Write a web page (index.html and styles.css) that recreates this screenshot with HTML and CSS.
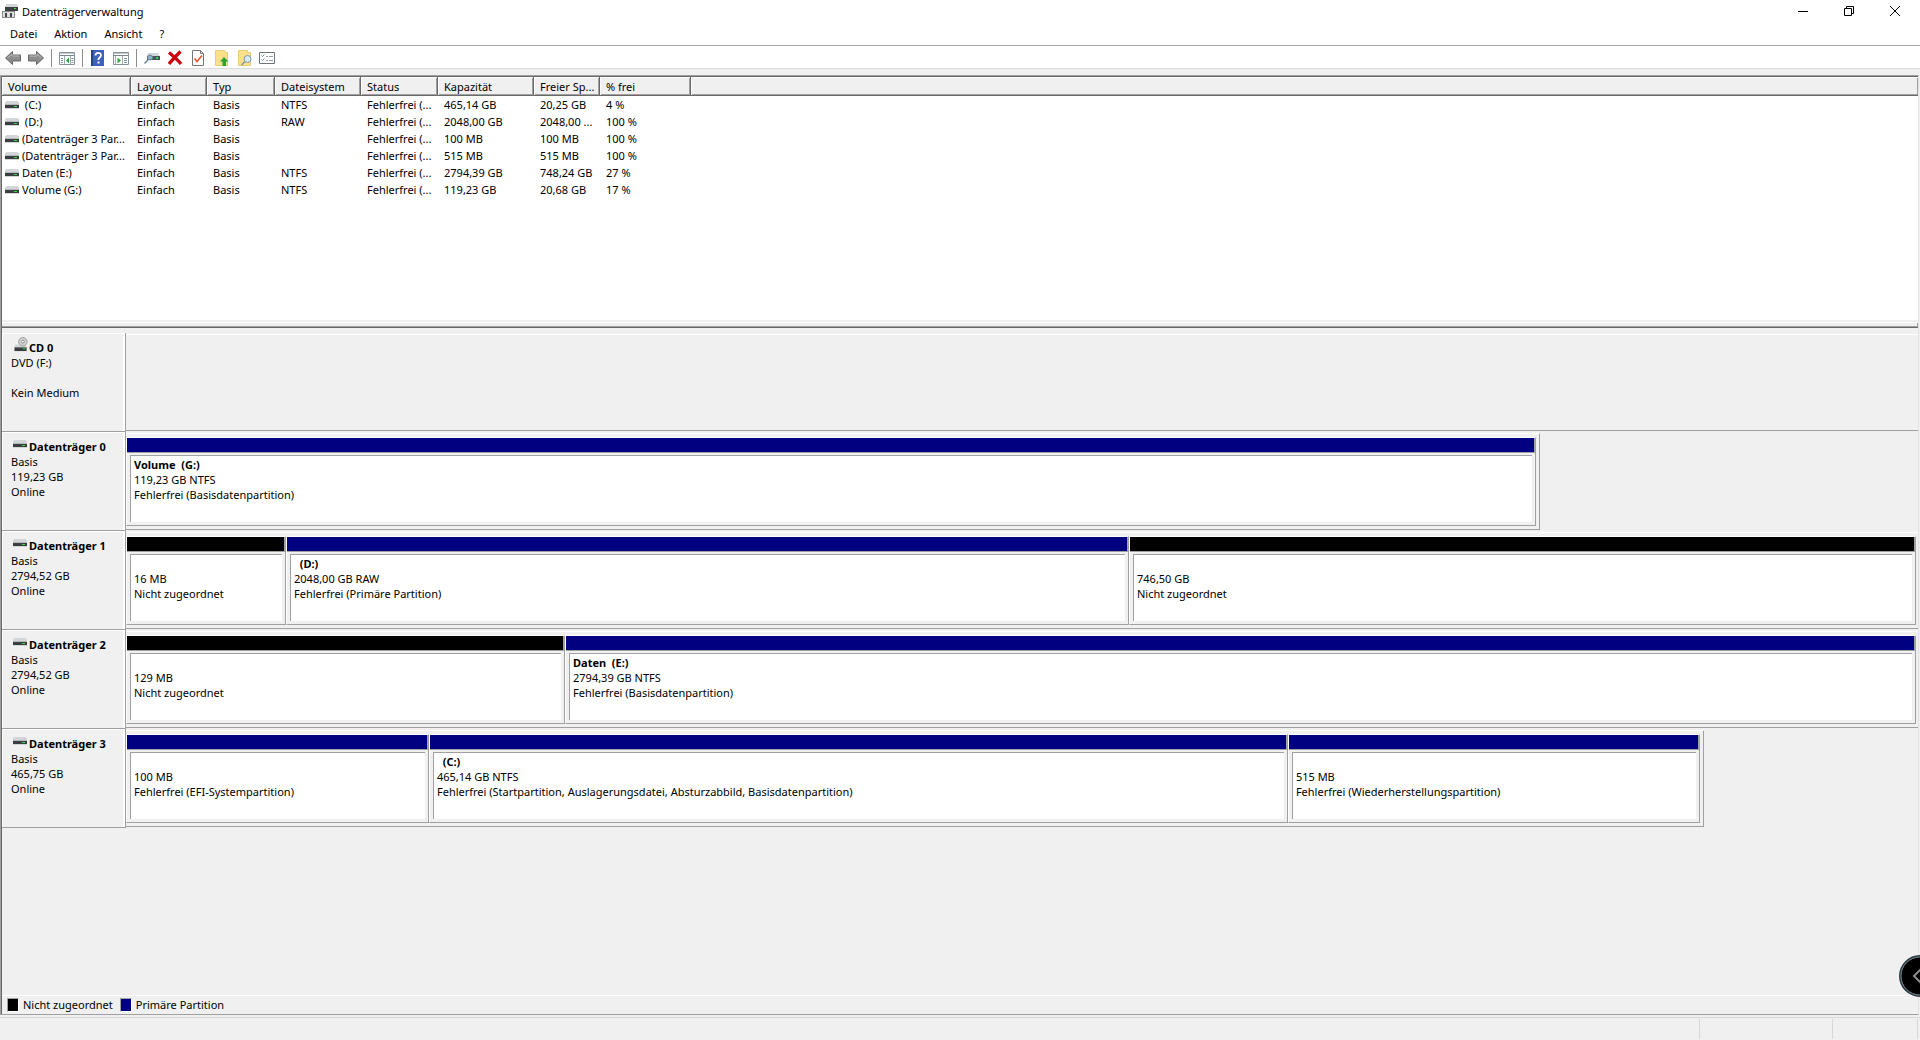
FILE: index.html
```html
<!DOCTYPE html>
<html lang="de">
<head>
    <meta charset="UTF-8">
    <meta name="viewport" content="width=device-width, initial-scale=1.0">
    <title>Datenträgerverwaltung</title>
    <link rel="stylesheet" href="styles.css">
</head>
<body>
    <!-- shared icons -->
    <svg class="sprite" aria-hidden="true">
        <symbol id="drive" viewBox="0 0 14 8">
            <path d="M1 0h12v1h1v3H0V1h1z" fill="#d3d6d9"/>
            <path d="M0 4h14v3H0z" fill="#3c3f42"/>
            <path d="M0 3h14v1H0z" fill="#b4b8bb"/>
            <path d="M9 5h3v1H9z" fill="#35d94a"/>
            <path d="M0 7h14v1H0z" fill="#d2d4d6"/>
        </symbol>
        <symbol id="cd" viewBox="0 0 16 16">
            <path d="M2 8h11l1 3H1z" fill="#d3d6d9"/>
            <circle cx="10" cy="5" r="4.500" fill="#d0d0d0" stroke="#9b9b9b"/>
            <circle cx="10" cy="5" r="1.500" fill="#f4f4f4" stroke="#8f8f8f"/>
            <path d="M1 11h13v4H1z" fill="#3c3f42"/>
            <path d="M10 12h3v1h-3z" fill="#35d94a"/>
        </symbol>
    </svg>

    <header class="title-bar">
        <svg class="app-icon" viewBox="0 0 16 16" aria-hidden="true">
            <path d="M4 1h11l1 3H3z" fill="#d3d6d9"/>
            <path d="M3 4h13v4H3z" fill="#3c3f42"/>
            <path d="M12 5h2v1h-2z" fill="#35d94a"/>
            <path d="M0 8h13v7H0z" fill="#8b8b8b"/>
            <path d="M1 9h11v5H1z" fill="#dedede"/>
            <path d="M3 10h2v4H3zM8 10h2v4H8z" fill="#444"/>
        </svg>
        <h1>Datenträgerverwaltung</h1>
        <div class="window-buttons">
            <button type="button" aria-label="Minimieren"><svg viewBox="0 0 10 10"><path d="M0 5.500h10"/></svg></button>
            <button type="button" aria-label="Verkleinern"><svg viewBox="0 0 10 10"><path d="M.5 2.500h7v7h-7zM2.500 2.500v-2h7v7h-2"/></svg></button>
            <button type="button" aria-label="Schließen"><svg viewBox="0 0 10 10"><path d="M0 0l10 10M10 0L0 10"/></svg></button>
        </div>
    </header>

    <nav class="menu-bar">
        <button type="button">Datei</button>
        <button type="button">Aktion</button>
        <button type="button">Ansicht</button>
        <button type="button">?</button>
    </nav>

    <div class="toolbar">
        <button type="button" aria-label="Zurück">
            <svg viewBox="0 0 16 16"><path d="M.5 8L7.500 1.500v3.500h8v6h-8v3.500z" fill="#8d8d8d" stroke="#666"/><path d="M2.500 8L7 4v2h7.500" fill="none" stroke="#b9b9b9"/></svg>
        </button>
        <button type="button" aria-label="Vorwärts">
            <svg viewBox="0 0 16 16"><path d="M15.500 8L8.500 1.500v3.500h-8v6h8v3.500z" fill="#8d8d8d" stroke="#666"/><path d="M1.500 6H9V4l4.500 4" fill="none" stroke="#b9b9b9"/></svg>
        </button>
        <span class="separator"></span>
        <button type="button" aria-label="Konsolenstruktur">
            <svg viewBox="0 0 16 16"><path d="M.5 2.500h15v12H.5z" fill="#fff" stroke="#8a9299"/><path d="M1 3h14v1H1z" fill="#c3c9ce"/><path d="M1 5.500h14" stroke="#7d858c"/><path d="M5.500 6v8M11.500 6v8" stroke="#a4abb2"/><path d="M2 8.500h2M2 10.500h2M2 12.500h2M12.500 8.500h2M12.500 10.500h2M12.500 12.500h2" stroke="#7b93ab"/><path d="M10 7.500v6L7 10.500z" fill="#2fa836"/></svg>
        </button>
        <span class="separator"></span>
        <button type="button" aria-label="Hilfe">
            <svg viewBox="0 0 16 16"><path d="M1 0h13v16H1z" fill="#3c5fc0"/><path d="M1 0h2v16H1z" fill="#28418f"/><path d="M5.500 5.500C5.500 2 11 2 11 5.300c0 2.200-2.700 2.200-2.700 4.700" fill="none" stroke="#fff" stroke-width="1.800"/><path d="M7.500 11.500h2v2h-2z" fill="#fff"/></svg>
        </button>
        <button type="button" aria-label="Aktionsbereich">
            <svg viewBox="0 0 16 16"><path d="M.5 2.500h15v12H.5z" fill="#fff" stroke="#8a9299"/><path d="M1 3h14v1H1z" fill="#c3c9ce"/><path d="M1 5.500h14" stroke="#7d858c"/><path d="M2.500 6v8M9.500 6v8" stroke="#a4abb2"/><path d="M11 8.500h3M11 10.500h3M11 12.500h3" stroke="#7b93ab"/><path d="M4.500 7.500v6L8 10.500z" fill="#2fa836"/></svg>
        </button>
        <span class="separator"></span>
        <button type="button" aria-label="Datenträger neu einlesen">
            <svg viewBox="0 0 16 16"><path d="M4 3h10l2 3H3z" fill="#d3d6d9"/><path d="M3 6h13v4H3z" fill="#48545b"/><path d="M12 7h2v2h-2z" fill="#35d94a"/><circle cx="6" cy="7.500" r="2.500" fill="#8fb4cc" stroke="#66859b"/><path d="M4 10L.5 13.500" stroke="#66859b" stroke-width="1.500"/></svg>
        </button>
        <button type="button" aria-label="Löschen">
            <svg viewBox="0 0 16 16"><path d="M2 2.500C5 5 11 10 14 14M13.500 1.500C10 5 5 10 2 14" fill="none" stroke="#c8040f" stroke-width="3.200"/></svg>
        </button>
        <button type="button" aria-label="Eigenschaften">
            <svg viewBox="0 0 16 16"><path d="M2.500.5h8l3 3v12h-11z" fill="#fff" stroke="#777"/><path d="M10.500.5v3h3" fill="none" stroke="#777"/><path d="M4.500 8.500L7 11.500l5-6" fill="none" stroke="#e2552b" stroke-width="1.600"/></svg>
        </button>
        <button type="button" aria-label="Übergeordneter Ordner">
            <svg viewBox="0 0 16 16"><path d="M2.500.5h9v2h3v13h-12z" fill="#fbe08a" stroke="#e9cd78"/><path d="M11 7l4.500 4.500h-2.500V16H9.500v-4.500H7z" fill="#29a52c"/></svg>
        </button>
        <button type="button" aria-label="Suchen">
            <svg viewBox="0 0 16 16"><path d="M2.500.5h9v2h3v13h-12z" fill="#fbe08a" stroke="#e9cd78"/><circle cx="11.500" cy="9" r="3.500" fill="#d4ecf8" stroke="#8296a5"/><path d="M9 11.500L5.500 15" stroke="#8296a5" stroke-width="1.600"/></svg>
        </button>
        <button type="button" aria-label="Liste">
            <svg viewBox="0 0 16 16"><path d="M.5 2.500h15v11H.5z" fill="#fff" stroke="#6d747b"/><path d="M2.500 5.500l1 1 2-2M2.500 9.500l1 1 2-2" fill="none" stroke="#4b8fd0"/><path d="M7 6.500h2M10 6.500h4M7 10.500h2M10 10.500h4" stroke="#9aa1a8"/></svg>
        </button>
    </div>

    <main class="content">
        <section class="volume-list">
            <table>
                <colgroup>
                    <col class="col-volume"><col class="col-layout"><col class="col-type"><col class="col-fs"><col class="col-status"><col class="col-capacity"><col class="col-free"><col class="col-percent"><col>
                </colgroup>
                <thead>
                    <tr><th>Volume</th><th>Layout</th><th>Typ</th><th>Dateisystem</th><th>Status</th><th>Kapazität</th><th>Freier Sp...</th><th>% frei</th><th></th></tr>
                </thead>
                <tbody>
                    <tr><td><svg class="drive"><use href="#drive"/></svg>&nbsp;(C:)</td><td>Einfach</td><td>Basis</td><td>NTFS</td><td>Fehlerfrei (...</td><td>465,14 GB</td><td>20,25 GB</td><td>4 %</td><td></td></tr>
                    <tr><td><svg class="drive"><use href="#drive"/></svg>&nbsp;(D:)</td><td>Einfach</td><td>Basis</td><td>RAW</td><td>Fehlerfrei (...</td><td>2048,00 GB</td><td>2048,00 ...</td><td>100 %</td><td></td></tr>
                    <tr><td><svg class="drive"><use href="#drive"/></svg>(Datenträger 3 Par...</td><td>Einfach</td><td>Basis</td><td></td><td>Fehlerfrei (...</td><td>100 MB</td><td>100 MB</td><td>100 %</td><td></td></tr>
                    <tr><td><svg class="drive"><use href="#drive"/></svg>(Datenträger 3 Par...</td><td>Einfach</td><td>Basis</td><td></td><td>Fehlerfrei (...</td><td>515 MB</td><td>515 MB</td><td>100 %</td><td></td></tr>
                    <tr><td><svg class="drive"><use href="#drive"/></svg>Daten (E:)</td><td>Einfach</td><td>Basis</td><td>NTFS</td><td>Fehlerfrei (...</td><td>2794,39 GB</td><td>748,24 GB</td><td>27 %</td><td></td></tr>
                    <tr><td><svg class="drive"><use href="#drive"/></svg>Volume (G:)</td><td>Einfach</td><td>Basis</td><td>NTFS</td><td>Fehlerfrei (...</td><td>119,23 GB</td><td>20,68 GB</td><td>17 %</td><td></td></tr>
                </tbody>
            </table>
        </section>

        <div class="splitter"></div>

        <section class="disks">
            <article class="disk">
                <div class="disk-info">
                    <h2><svg class="cd"><use href="#cd"/></svg>CD 0</h2>
                    <p>DVD (F:)</p>
                    <p>&nbsp;</p>
                    <p>Kein Medium</p>
                </div>
                <div class="disk-area no-media"></div>
            </article>

            <article class="disk">
                <div class="disk-info">
                    <h2><svg class="drive"><use href="#drive"/></svg>Datenträger 0</h2>
                    <p>Basis</p>
                    <p>119,23 GB</p>
                    <p>Online</p>
                </div>
                <div class="disk-area">
                    <div class="partitions" style="width: 78.9%">
                        <div class="partition primary" style="flex-grow: 1">
                            <div class="details"><h3>Volume&nbsp; (G:)</h3><p>119,23 GB NTFS</p><p>Fehlerfrei (Basisdatenpartition)</p></div>
                        </div>
                    </div>
                </div>
            </article>

            <article class="disk">
                <div class="disk-info">
                    <h2><svg class="drive"><use href="#drive"/></svg>Datenträger 1</h2>
                    <p>Basis</p>
                    <p>2794,52 GB</p>
                    <p>Online</p>
                </div>
                <div class="disk-area">
                    <div class="partitions full">
                        <div class="partition unallocated" style="flex-grow: 158">
                            <div class="details"><h3>&nbsp;</h3><p>16 MB</p><p>Nicht zugeordnet</p></div>
                        </div>
                        <div class="partition primary" style="flex-grow: 841">
                            <div class="details"><h3>&nbsp; (D:)</h3><p>2048,00 GB RAW</p><p>Fehlerfrei (Primäre Partition)</p></div>
                        </div>
                        <div class="partition unallocated" style="flex-grow: 785">
                            <div class="details"><h3>&nbsp;</h3><p>746,50 GB</p><p>Nicht zugeordnet</p></div>
                        </div>
                    </div>
                </div>
            </article>

            <article class="disk">
                <div class="disk-info">
                    <h2><svg class="drive"><use href="#drive"/></svg>Datenträger 2</h2>
                    <p>Basis</p>
                    <p>2794,52 GB</p>
                    <p>Online</p>
                </div>
                <div class="disk-area">
                    <div class="partitions full">
                        <div class="partition unallocated" style="flex-grow: 437">
                            <div class="details"><h3>&nbsp;</h3><p>129 MB</p><p>Nicht zugeordnet</p></div>
                        </div>
                        <div class="partition primary" style="flex-grow: 1349">
                            <div class="details"><h3>Daten&nbsp; (E:)</h3><p>2794,39 GB NTFS</p><p>Fehlerfrei (Basisdatenpartition)</p></div>
                        </div>
                    </div>
                </div>
            </article>

            <article class="disk">
                <div class="disk-info">
                    <h2><svg class="drive"><use href="#drive"/></svg>Datenträger 3</h2>
                    <p>Basis</p>
                    <p>465,75 GB</p>
                    <p>Online</p>
                </div>
                <div class="disk-area">
                    <div class="partitions" style="width: 88.05%">
                        <div class="partition primary" style="flex-grow: 301">
                            <div class="details"><h3>&nbsp;</h3><p>100 MB</p><p>Fehlerfrei (EFI-Systempartition)</p></div>
                        </div>
                        <div class="partition primary" style="flex-grow: 857">
                            <div class="details"><h3>&nbsp; (C:)</h3><p>465,14 GB NTFS</p><p>Fehlerfrei (Startpartition, Auslagerungsdatei, Absturzabbild, Basisdatenpartition)</p></div>
                        </div>
                        <div class="partition primary" style="flex-grow: 410">
                            <div class="details"><h3>&nbsp;</h3><p>515 MB</p><p>Fehlerfrei (Wiederherstellungspartition)</p></div>
                        </div>
                    </div>
                </div>
            </article>
        </section>

        <footer class="legend">
            <span class="swatch unallocated-swatch"></span>Nicht zugeordnet
            <span class="swatch primary-swatch"></span>Primäre Partition
        </footer>
    </main>

    <div class="status-bar"><span></span><span></span><span></span></div>

    <button type="button" class="side-handle" aria-label="Einblenden">
        <svg viewBox="0 0 42 42"><circle cx="21" cy="21" r="20" fill="#000" stroke="#2c3c44" stroke-width="2"/><circle cx="21" cy="21" r="19" fill="none" stroke="#7f8b91"/><path d="M22 14l-7 7 7 7" fill="none" stroke="#8c8c8c" stroke-width="2"/></svg>
    </button>
</body>
</html>
```
FILE: styles.css
```css
* {
    box-sizing: border-box;
}
body {
    display: flex;
    flex-direction: column;
    height: 100vh;
    margin: 0;
    overflow: hidden;
    background-color: #f0f0f0;
    color: #000;
    font-family: "Noto Sans", "Open Sans", sans-serif;
    font-size: 11px;
    line-height: 15px;
}
h1, h2, h3, p {
    margin: 0;
    font-size: 11px;
}
button {
    padding: 0;
    border: none;
    background: none;
    font: inherit;
    color: inherit;
}
.sprite {
    display: none;
}

/* title and menu */
.title-bar {
    display: flex;
    flex: none;
    align-items: center;
    height: 22px;
    padding: 0 2px;
    background-color: #fff;
}
.title-bar h1 {
    flex: 1;
    padding-left: 4px;
    font-weight: normal;
}
.app-icon {
    width: 16px;
    height: 16px;
}
.window-buttons {
    display: flex;
}
.window-buttons button {
    width: 46px;
    height: 20px;
}
.window-buttons svg {
    width: 10px;
    height: 10px;
    fill: none;
    stroke: #000;
}
.menu-bar {
    display: flex;
    flex: none;
    gap: 17px;
    height: 24px;
    padding-left: 10px;
    border-bottom: 1px solid #a8a8a8;
    background-color: #fff;
}

/* toolbar */
.toolbar {
    display: flex;
    flex: none;
    align-items: center;
    gap: 7px;
    height: 23px;
    padding: 2px 0 0 5px;
    border-bottom: 1px solid #dadada;
    background-color: #fff;
}
.toolbar button, .toolbar svg {
    display: block;
    width: 16px;
    height: 16px;
}
.separator {
    width: 1px;
    height: 18px;
    background-color: #8c8c8c;
}

/* volume table */
.content {
    display: flex;
    flex: 1;
    flex-direction: column;
    min-height: 0;
    margin: 6px 1px 0 0;
    border: 1px solid #a0a0a0;
    border-right-color: #e3e3e3;
    box-shadow: inset 1px 1px #696969;
    padding: 1px 0 0 1px;
}
.volume-list {
    flex: none;
    height: 243px;
    background-color: #fff;
}
table {
    width: 100%;
    table-layout: fixed;
    border-collapse: separate;
    border-spacing: 0;
}
.col-volume { width: 129px; }
.col-layout { width: 76px; }
.col-type { width: 68px; }
.col-fs { width: 86px; }
.col-status { width: 77px; }
.col-capacity { width: 96px; }
.col-free { width: 66px; }
.col-percent { width: 91px; }
th, td {
    overflow: hidden;
    padding: 0 0 0 6px;
    font-weight: normal;
    text-align: left;
    white-space: nowrap;
}
th {
    height: 19px;
    border-right: 1px solid #696969;
    border-bottom: 1px solid #696969;
    background-color: #f0f0f0;
    box-shadow: inset 1px 1px #fff, inset -1px -1px #a0a0a0;
}
th:last-child {
    border-right: none;
}
td {
    height: 17px;
}
td:first-child {
    padding-left: 3px;
}
.drive {
    width: 14px;
    height: 8px;
    shape-rendering: crispEdges;
}
td .drive {
    margin-right: 3px;
}
.splitter {
    flex: none;
    height: 8px;
    border-top: 2px solid #f0f0f0;
    border-bottom: 1px solid #696969;
    box-shadow: inset 0 1px #fff, inset -1px -1px #a0a0a0;
}

/* graphical view */
.disks {
    flex: 1;
    min-height: 0;
    padding-top: 5px;
}
.disk {
    display: flex;
    height: 99px;
}
.disk-info {
    flex: none;
    width: 124px;
    padding: 7px 0 0 9px;
    border-right: 1px solid #a0a0a0;
    border-bottom: 1px solid #a0a0a0;
    box-shadow: inset 1px 1px #fff, inset -2px 0 #fff;
}
.disk-info h2 {
    white-space: nowrap;
}
.disk-info .drive {
    margin: 0 2px 3px 2px;
}
.disk-info .cd {
    width: 16px;
    height: 15px;
    margin: -4px 0 0 2px;
}
.disk-area {
    flex: 1;
    min-width: 0;
    overflow: hidden;
    padding: 1px 0;
}
.no-media {
    margin: 1px 0;
    border-top: 1px solid #fff;
    border-bottom: 1px solid #a0a0a0;
}
.partitions {
    display: flex;
    height: 97px;
    padding: 3px 3px 3px 0;
    border-top: 1px solid #fff;
    border-right: 1px solid #a0a0a0;
    border-bottom: 1px solid #a0a0a0;
}
.full {
    padding-right: 2px;
    border-right: none;
}
.partition {
    display: flex;
    flex-basis: 0;
    flex-direction: column;
    min-width: 0;
    border: 1px solid #a0a0a0;
    border-top-color: #fff;
    border-left-color: #fff;
}
.partition::before {
    flex: none;
    height: 14px;
    border-right: 1px solid #a0a0a0;
    border-bottom: 1px solid #a0a0a0;
    background-color: #000080;
    content: "";
}
.unallocated::before {
    background-color: #000;
}
.details {
    flex: 1;
    margin: 2px 3px 3px 3px;
    padding: 1px 0 0 3px;
    overflow: hidden;
    border-top: 1px solid #a0a0a0;
    border-left: 1px solid #a0a0a0;
    background-color: #fff;
    white-space: nowrap;
}

/* legend and status */
.legend {
    display: flex;
    flex: none;
    align-items: center;
    height: 19px;
    padding: 0 0 1px 5px;
    border-top: 1px solid #fff;
}
.swatch {
    width: 12px;
    height: 14px;
    margin-right: 4px;
    border: 1px solid #a0a0a0;
    border-right-color: #fff;
    border-bottom-color: #fff;
}
.unallocated-swatch {
    background-color: #000;
}
.primary-swatch {
    margin-left: 7px;
    background-color: #000080;
}
.status-bar {
    display: flex;
    flex: none;
    justify-content: flex-end;
    height: 23px;
    margin-top: 2px;
    padding: 1px 2px 1px 0;
    border-top: 1px solid #d7d7d7;
}
.status-bar span {
    width: 85px;
    border-right: 1px solid #d7d7d7;
}
.status-bar span:nth-child(2) {
    width: 133px;
}
.side-handle {
    position: absolute;
    right: -21px;
    bottom: 43px;
    width: 42px;
    height: 42px;
}
.side-handle svg {
    display: block;
}
```
